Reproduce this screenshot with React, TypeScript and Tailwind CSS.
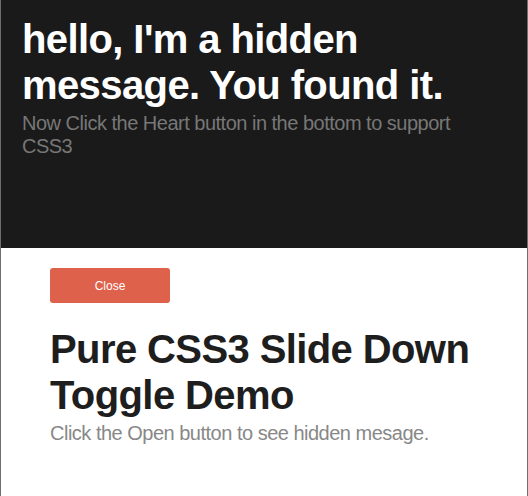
import { useState } from "react";

export default function App() {
  const [open, setOpen] = useState(true);

  return (
    <div className="min-h-[496px] border-x border-[#6e6e6e] bg-white font-['Liberation_Sans',Arial,sans-serif]">
      {open && (
        <div className="h-[248px] bg-[#1a1a1a] pl-[21px] pr-[44px] pt-[16px]">
          <h1 className="text-[40px] font-bold leading-[46px] tracking-[-0.6px] text-white">
            hello, I'm a hidden message. You found it.
          </h1>
          <p className="mt-[4px] text-[20px] leading-[23px] tracking-[-0.5px] text-[#777777]">
            Now Click the Heart button in the bottom to support CSS3
          </p>
        </div>
      )}
      <div className="px-[49px] pt-[20px] pb-10">
        <button
          onClick={() => setOpen(!open)}
          className="h-[35px] w-[120px] rounded-[3px] bg-[#de614b] text-[12px] text-white"
        >
          {open ? "Close" : "Open"}
        </button>
        <h2 className="mt-[23px] text-[40px] font-bold leading-[46px] tracking-[-0.6px] text-[#1e1e1e]">
          Pure CSS3 Slide Down Toggle Demo
        </h2>
        <p className="mt-[4px] text-[20px] leading-[23px] tracking-[-0.5px] text-[#888888]">
          Click the Open button to see hidden mesage.
        </p>
      </div>
    </div>
  );
}
